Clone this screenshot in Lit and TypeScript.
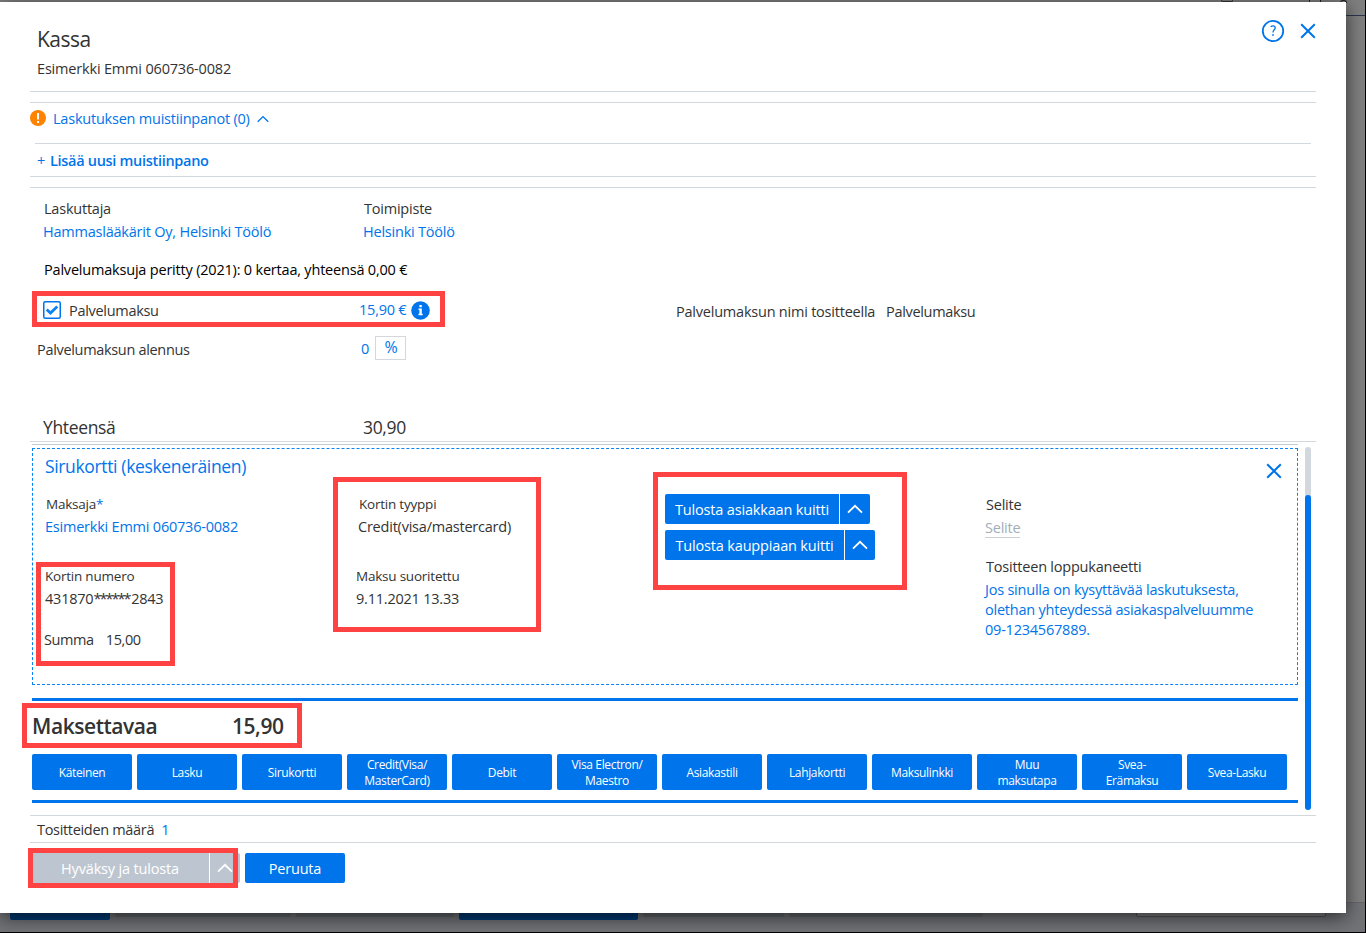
import { LitElement, html, css } from "lit";
import { customElement } from "lit/decorators.js";

const chevron = html`<svg class="chev" viewBox="0 0 16 10" width="16" height="10"><path d="M1 8.6 8 1.8l7 6.8" fill="none" stroke="currentColor" stroke-width="1.8"/></svg>`;
const cross = html`<svg viewBox="0 0 16 16" width="16" height="16"><path d="M1.2 1.2l13.6 13.6M14.8 1.2L1.2 14.8" fill="none" stroke="#0074ea" stroke-width="2"/></svg>`;

@customElement("app-root")
export class AppRoot extends LitElement {
  static styles = css`
    :host {
      display: block;
      position: relative;
      width: 1366px;
      height: 933px;
      overflow: hidden;
      background: #808080;
      color: #333;
      font: 14.5px/20px "Open Sans", "Noto Sans", sans-serif;
      letter-spacing: -0.22px;
      --blue: #0074ea;
      --line: #d2d8de;
    }
    * { box-sizing: border-box; }
    .blue { color: var(--blue); }
    .page { position: absolute; inset: 0; border-right: 1px solid #000; border-bottom: 1px solid #000; display: flex; flex-direction: column; justify-content: space-between; }
    .page-top { height: 16px; border-bottom: 1px solid #2b3550; display: flex; justify-content: flex-end; gap: 10px; padding-right: 18px; }
    .tick { width: 1px; height: 2px; background: #222; }
    .tick.wide { width: 7px; height: 3px; margin-left: 9px; background: none; border: solid #222; border-width: 1px 1px 0; border-radius: 3px 3px 0 0; }
    .tick.curve { width: 12px; height: 2px; margin-right: 66px; background: none; border: solid #333; border-width: 0 1px 1px; border-radius: 0 0 5px 5px; }
    .page-foot { height: 30px; background: #727377; border-top: 1px solid #66676d; display: flex; gap: 5px; padding-left: 10px; }
    .pf { height: 14px; background: #63676b; border-radius: 2px; }
    .pf.b { background: #003a75; }
    .pf.w1 { width: 100px; } .pf.w2 { width: 176px; } .pf.w3 { width: 158px; }
    .pf.w4 { width: 179px; } .pf.w5 { width: 141px; } .pf.w6 { width: 194px; }
    .pf.field { width: 190px; margin-left: 148px; background: #808080; border: 1px solid #505358; }

    .dialog { position: absolute; left: 0; top: 2px; width: 1346px; height: 911px; background: #fff; padding: 0 30px; box-shadow: 0 4px 18px rgba(0,0,0,.65); }
    header { height: 90px; border-bottom: 1px solid var(--line); padding: 24px 0 0 7px; display: flex; justify-content: space-between; }
    h1 { margin: 0; font-weight: 400; font-size: 21px; line-height: 26px; letter-spacing: -0.5px; }
    .who { margin-top: 7px; letter-spacing: -0.18px; }
    .tools { display: flex; gap: 15px; align-items: center; height: 24px; margin-top: -7px; }
    .tools svg, .x svg { display: block; }

    .notes { margin-top: 10px; height: 75px; border: solid var(--line); border-width: 1px 0; }
    .notes-head { height: 40px; display: flex; align-items: center; color: var(--blue); padding-bottom: 8px; }
    .notes-head svg:first-child { margin: -2px 7px 0 0; }
    .notes-head .chev { width: 12px; height: 8px; margin: -1px 0 0 7px; }
    .add { margin: 0 5px; border-top: 1px solid var(--line); padding: 7px 2px 0; color: var(--blue); font-weight: 600; letter-spacing: -0.3px; }
    .add .plus { font-weight: 400; margin-right: 5px; }

    .info { margin-top: 10px; height: 255px; border: solid var(--line); border-width: 1px 0; padding: 11px 0 0 13px; }
    .two { display: grid; grid-template-columns: 320px 1fr; row-gap: 3px; }
    .two .lab { padding-left: 1px; }
    .sum { margin: 18px 0 0 1px; color: #000; letter-spacing: -0.2px; }
    .fee { display: flex; align-items: center; height: 20px; margin-top: 20px; }
    .fee .name { width: 298px; padding-left: 8px; margin-top: 1px; letter-spacing: -0.3px; }
    .fee .amount { color: var(--blue); width: 48px; margin-right: 4px; margin-top: -1px; white-space: nowrap; }
    .fee .rname { width: 199px; margin: 3px 11px 0 246px; white-space: nowrap; }
    .fee .rval { margin-top: 3px; letter-spacing: -0.32px; }
    .disc { display: flex; height: 24px; margin: 16px 0 0 -6px; }
    .disc .l { width: 324px; padding-top: 4px; letter-spacing: -0.32px; }
    .disc .v { color: var(--blue); width: 14px; padding-top: 3px; }
    .pct { width: 31px; height: 24px; border: 1px solid var(--line); color: var(--blue); text-align: center; line-height: 21px; font-size: 16px; padding-left: 1px; }
    .total { font-size: 17.5px; line-height: 24px; margin-top: 55px; letter-spacing: -0.35px; }

    .scroll { display: flex; justify-content: space-between; padding: 2px 5px 0 2px; height: 369px; }
    .pane { width: 1266px; border-top: 1px solid #c3ccd6; padding-top: 3px; }
    .bar { width: 6px; height: 363px; margin-top: 3px; border-radius: 3px; background: var(--line); padding-top: 48px; }
    .thumb { height: 315px; border-radius: 3px; background: var(--blue); }
    .card { height: 237px; border: 1px dashed #0a84f5; padding-left: 12px; display: grid; grid-template-columns: 313px 306px 321px 1fr; grid-template-rows: 35px 1fr; }
    .card h2 { margin: 5px 0 0; font-weight: 400; font-size: 17.5px; line-height: 24px; letter-spacing: -0.35px; color: var(--blue); grid-column: 1 / 4; }
    .x { justify-self: end; padding: 14px 15px 0 0; }
    .sm { font-size: 13.5px; }
    .col { padding-top: 10px; display: flex; flex-direction: column; }
    .c1 .a, .c2 .a, .c4 .a { padding-left: 1px; }
    .b { margin-top: 3px; }
    .c { margin-top: 29px; }
    .d { margin-top: 21px; display: flex; gap: 12px; margin-left: -1px; letter-spacing: -0.4px; }
    .c2 .c, .c2 .e { margin-left: -2px; }
    .e { margin-top: 3px; }
    .stars { letter-spacing: -1.95px; margin-right: 1.5px; }
    .c3 { padding: 10px 0 0 0; gap: 6px; align-items: flex-start; }
    .split { display: flex; height: 30px; line-height: 30px; color: #fff; gap: 1px; letter-spacing: -0.17px; }
    .split > span { background: var(--blue); display: flex; align-items: center; justify-content: center; }
    .split > span:first-child { border-radius: 2px 0 0 2px; padding-top: 1px; }
    .split > span:last-child { border-radius: 0 2px 2px 0; width: 30px; }
    .c3 .split { margin-left: 1px; }
    .s1 > span:first-child { width: 174px; } .s2 > span:first-child { width: 179px; }
    .c4 .a { padding-top: 1px; }
    .c4 .ph { color: #a3adb8; border-bottom: 1px solid #c8d0d8; align-self: flex-start; line-height: 19px; margin-top: 3px; }
    .c4 .t { margin: 19px 0 3px 1px; }

    .due { margin-top: 13px; height: 105px; border: solid var(--blue); border-width: 3px 0; }
    .due-line { display: flex; font-size: 21px; font-weight: 600; line-height: 30px; letter-spacing: -0.45px; padding-top: 10px; height: 53px; }
    .due-line span:first-child { width: 200px; }
    .methods { display: flex; gap: 5px; }
    .m { width: 100px; height: 36px; border-radius: 2px; background: var(--blue); color: #fff; font-size: 12px; letter-spacing: -0.35px; line-height: 16px; display: flex; align-items: center; justify-content: center; text-align: center; white-space: pre; font-weight: 500; padding-top: 2px; }

    .count { margin-top: 4px; height: 28px; border: solid var(--line); border-width: 1px 0; padding: 4px 7px; display: flex; gap: 7px; letter-spacing: -0.32px; }
    .actions { display: flex; gap: 5px; padding: 10px 0 0 1px; }
    .ok > span { background: #bdc6d0; }
    .ok > span:first-child { width: 178px; }
    .btn { width: 100px; height: 30px; line-height: 30px; border-radius: 2px; background: var(--blue); color: #fff; text-align: center; padding-top: 1px; }

    .mark { position: absolute; border: 5px solid #ff4343; }
    .m1 { left: 32px; top: 291px; width: 413px; height: 36px; }
    .m2 { left: 36px; top: 562px; width: 139px; height: 104px; }
    .m3 { left: 333px; top: 477px; width: 208px; height: 155px; }
    .m4 { left: 653px; top: 472px; width: 254px; height: 118px; }
    .m5 { left: 22px; top: 703px; width: 280px; height: 45px; }
    .m6 { left: 28px; top: 848px; width: 210px; height: 40px; }
  `;

  methods = ["Käteinen", "Lasku", "Sirukortti", "Credit(Visa/\nMasterCard)", "Debit", "Visa Electron/\nMaestro", "Asiakastili", "Lahjakortti", "Maksulinkki", "Muu\nmaksutapa", "Svea-\nErämaksu", "Svea-Lasku"];

  render() {
    return html`
      <div class="page">
        <div class="page-top"><div class="tick curve"></div><div class="tick"></div><div class="tick"></div><div class="tick wide"></div></div>
        <div class="page-foot">
          <div class="pf b w1"></div><div class="pf w2"></div><div class="pf w3"></div><div class="pf b w4"></div><div class="pf w5"></div><div class="pf w6"></div><div class="pf field"></div>
        </div>
      </div>
      <div class="dialog">
        <header>
          <div><h1>Kassa</h1><div class="who">Esimerkki Emmi 060736-0082</div></div>
          <div class="tools">
            <svg width="24" height="24" viewBox="0 0 24 24"><circle cx="12" cy="12" r="10.2" fill="none" stroke="#0074ea" stroke-width="1.8"/><path d="M9.8 8c.6-.9 1.300-1.200 2.200-1.200 1.400 0 2.200.8 2.200 2 0 1.900-2.200 2.200-2.200 4.600" fill="none" stroke="#0074ea" stroke-width="1.3"/><rect x="11.200" y="15.200" width="1.600" height="1.600" fill="#0074ea"/></svg>
            ${cross}
          </div>
        </header>
        <section class="notes">
          <div class="notes-head">
            <svg width="16" height="16" viewBox="0 0 16 16"><circle cx="8" cy="8" r="8" fill="#ff8200"/><rect x="7" y="3" width="2" height="6.500" fill="#fff"/><rect x="7" y="11" width="2" height="2" fill="#fff"/></svg>
            <span>Laskutuksen muistiinpanot (0)</span>${chevron}
          </div>
          <div class="add"><span class="plus">+</span>Lisää uusi muistiinpano</div>
        </section>
        <section class="info">
          <div class="two">
            <span class="lab">Laskuttaja</span><span class="lab">Toimipiste</span>
            <span class="blue">Hammaslääkärit Oy, Helsinki Töölö</span><span class="blue">Helsinki Töölö</span>
          </div>
          <div class="sum">Palvelumaksuja peritty (2021): 0 kertaa, yhteensä 0,00 €</div>
          <div class="fee">
            <svg width="18" height="18" viewBox="0 0 18 18"><rect x=".75" y=".75" width="16.500" height="16.500" rx="1.500" fill="#fff" stroke="#0074ea" stroke-width="1.500"/><path d="M3.700 8.400l3.800 3.700 6.800-6.600" fill="none" stroke="#0a84f5" stroke-width="2.800"/></svg>
            <span class="name">Palvelumaksu</span><span class="amount">15,90 €</span>
            <svg width="19" height="19" viewBox="0 0 19 19"><circle cx="9.500" cy="9.500" r="9.300" fill="#0074ea"/><path d="M8.400 4h2.400v2.200H8.400zM7.500 7.500h3.300v5.300h.9v1.500H7.500v-1.500h.9V9h-.9z" fill="#fff"/></svg>
            <span class="rname">Palvelumaksun nimi tositteella</span><span class="rval">Palvelumaksu</span>
          </div>
          <div class="disc"><span class="l">Palvelumaksun alennus</span><span class="v">0</span><span class="pct">%</span></div>
          <div class="two total"><span>Yhteensä</span><span>30,90</span></div>
        </section>
        <div class="scroll">
          <div class="pane">
            <section class="card">
              <h2>Sirukortti (keskeneräinen)</h2><div class="x">${cross}</div>
              <div class="col c1">
                <span class="a sm">Maksaja<span class="blue">*</span></span><span class="b blue">Esimerkki Emmi 060736-0082</span>
                <span class="c sm">Kortin numero</span><span class="e">431870<span class="stars">******</span>2843</span>
                <span class="d"><span>Summa</span><span>15,00</span></span>
              </div>
              <div class="col c2">
                <span class="a sm">Kortin tyyppi</span><span class="b">Credit(visa/mastercard)</span>
                <span class="c sm">Maksu suoritettu</span><span class="e">9.11.2021 13.33</span>
              </div>
              <div class="col c3">
                <div class="split s1"><span>Tulosta asiakkaan kuitti</span><span>${chevron}</span></div>
                <div class="split s2"><span>Tulosta kauppiaan kuitti</span><span>${chevron}</span></div>
              </div>
              <div class="col c4">
                <span class="a">Selite</span><span class="ph">Selite</span>
                <span class="t">Tositteen loppukaneetti</span>
                <span class="blue">Jos sinulla on kysyttävää laskutuksesta,<br>olethan yhteydessä asiakaspalveluumme<br>09-1234567889.</span>
              </div>
            </section>
            <section class="due">
              <div class="due-line"><span>Maksettavaa</span><span>15,90</span></div>
              <div class="methods">${this.methods.map((m) => html`<div class="m">${m}</div>`)}</div>
            </section>
          </div>
          <div class="bar"><div class="thumb"></div></div>
        </div>
        <div class="count"><span>Tositteiden määrä</span><span class="blue">1</span></div>
        <div class="actions">
          <div class="split ok"><span>Hyväksy ja tulosta</span><span>${chevron}</span></div>
          <div class="btn">Peruuta</div>
        </div>
      </div>
      <div class="mark m1"></div><div class="mark m2"></div><div class="mark m3"></div><div class="mark m4"></div><div class="mark m5"></div><div class="mark m6"></div>
    `;
  }
}
